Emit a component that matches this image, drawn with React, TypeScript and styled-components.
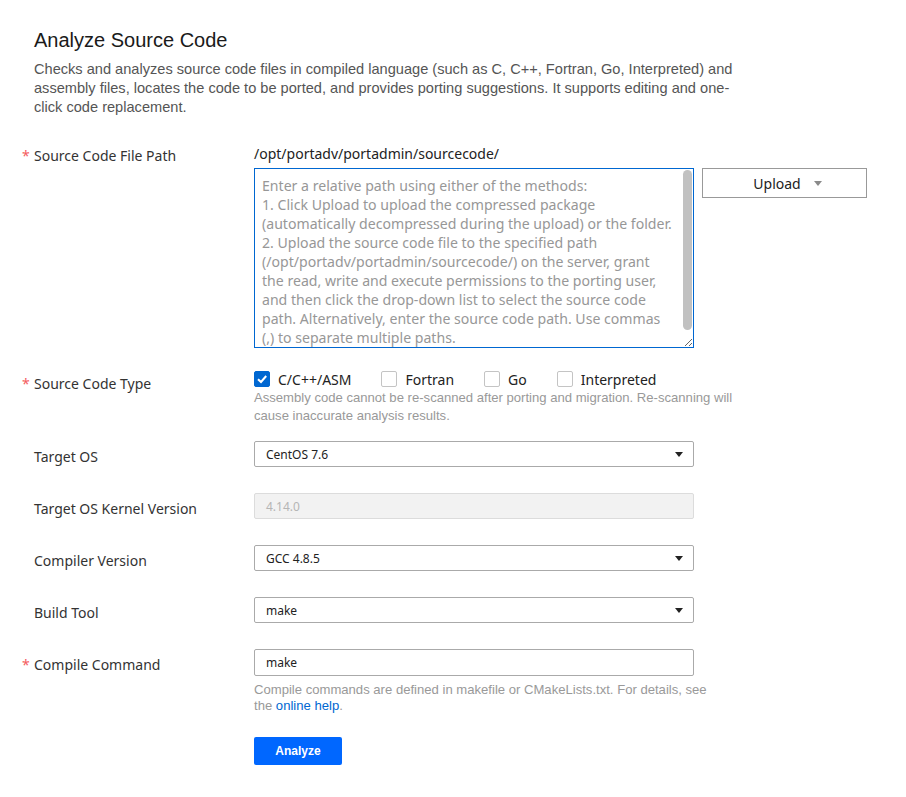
import * as React from "react";
import styled, { createGlobalStyle } from "styled-components";

const GlobalStyle = createGlobalStyle`
  html, body {
    margin: 0;
    padding: 0;
    background: #ffffff;
  }
  body {
    font-family: "Liberation Sans", Arial, sans-serif;
    color: #222;
  }
`;

const Page = styled.div`
  padding: 26px 34px 30px 34px;
  width: 906px;
  box-sizing: border-box;
`;

const Title = styled.h1`
  margin: 0 0 6px 0;
  font-size: 20px;
  line-height: 28px;
  font-weight: 400;
  color: #1a1a1a;
`;

const Description = styled.p`
  margin: 0 0 27px 0;
  max-width: 720px;
  font-size: 14.6px;
  line-height: 19px;
  color: #555;
`;

const Row = styled.div<{ gap: number }>`
  display: flex;
  align-items: flex-start;
  margin-bottom: ${p => p.gap}px;
`;

const Label = styled.div<{ offset: number }>`
  width: 220px;
  flex: 0 0 220px;
  padding-top: ${p => p.offset}px;
  font-family: "Noto Sans", "Open Sans", sans-serif;
  font-size: 14px;
  line-height: 20px;
  color: #333;
  box-sizing: border-box;
`;

const Star = styled.span<{ show: boolean }>`
  display: inline-block;
  width: 12px;
  margin-left: -12px;
  color: #f45c5e;
  visibility: ${p => (p.show ? "visible" : "hidden")};
`;

const Field = styled.div`
  display: flex;
  flex-direction: column;
`;

const PathText = styled.div`
  font-family: "Noto Sans", "Open Sans", sans-serif;
  font-size: 14px;
  line-height: 20px;
  color: #222;
  margin-bottom: 4px;
`;

const PathRow = styled.div`
  display: flex;
  align-items: flex-start;
  gap: 8px;
`;

const AreaWrap = styled.div`
  position: relative;
  width: 440px;
  height: 180px;
`;

const TextArea = styled.textarea`
  display: block;
  width: 440px;
  height: 180px;
  box-sizing: border-box;
  margin: 0;
  padding: 7px 4px 4px 7px;
  border: 1px solid #0067d1;
  border-radius: 0;
  outline: none;
  overflow: hidden;
  font-family: "Noto Sans", "Open Sans", sans-serif;
  font-size: 14.1px;
  line-height: 19px;
  color: #222;
  &::placeholder {
    color: #979797;
  }
`;

const ScrollThumb = styled.div`
  position: absolute;
  top: 2px;
  right: 2px;
  width: 9px;
  height: 160px;
  border-radius: 5px;
  background: #c1c1c1;
  pointer-events: none;
`;

const UploadButton = styled.button`
  width: 165px;
  height: 30px;
  display: flex;
  align-items: center;
  justify-content: center;
  gap: 13px;
  padding: 0 0 0 6px;
  background: #fff;
  border: 1px solid #999;
  border-radius: 0;
  font-family: "Noto Sans", "Open Sans", sans-serif;
  font-size: 14px;
  color: #222;
`;

const Caret = styled.span<{ tone: string; size: number }>`
  display: inline-block;
  width: 0;
  height: 0;
  border-left: ${p => p.size}px solid transparent;
  border-right: ${p => p.size}px solid transparent;
  border-top: ${p => p.size + 1}px solid ${p => p.tone};
`;

const CheckGroup = styled.div`
  display: flex;
  align-items: center;
  gap: 30px;
  height: 20px;
`;

const CheckItem = styled.label`
  display: flex;
  align-items: center;
  gap: 8px;
  font-family: "Noto Sans", "Open Sans", sans-serif;
  font-size: 14px;
  color: #222;
`;

const Box = styled.span<{ checked: boolean }>`
  width: 16px;
  height: 16px;
  box-sizing: border-box;
  border-radius: 2px;
  border: 1px solid ${p => (p.checked ? "#0067d1" : "#c4c4c4")};
  background: ${p => (p.checked ? "#0067d1" : "#fff")};
  display: flex;
  align-items: center;
  justify-content: center;
`;

const Hint = styled.div<{ lh: number; top: number; wrap: number }>`
  margin-top: ${p => p.top}px;
  max-width: ${p => p.wrap}px;
  font-family: "Liberation Sans", Arial, sans-serif;
  font-size: 13.1px;
  line-height: ${p => p.lh}px;
  color: #999;
`;

const Link = styled.a`
  color: #0067d1;
  text-decoration: none;
`;

const Select = styled.div<{ disabled?: boolean }>`
  width: 440px;
  height: 26px;
  box-sizing: border-box;
  display: flex;
  align-items: center;
  justify-content: space-between;
  padding: 0 10px 0 11px;
  border: 1px solid ${p => (p.disabled ? "#dcdcdc" : "#aaa")};
  border-radius: 2px;
  background: ${p => (p.disabled ? "#f2f2f2" : "#fff")};
  font-family: "Noto Sans", "Open Sans", sans-serif;
  font-size: 12px;
  color: ${p => (p.disabled ? "#b5b5b5" : "#222")};
`;

const TextInput = styled.div`
  width: 440px;
  height: 27px;
  box-sizing: border-box;
  display: flex;
  align-items: center;
  padding: 0 11px;
  border: 1px solid #aaa;
  border-radius: 2px;
  font-family: "Noto Sans", "Open Sans", sans-serif;
  font-size: 12px;
  color: #222;
`;

const PrimaryButton = styled.button`
  width: 88px;
  height: 28px;
  margin: 0;
  border: none;
  border-radius: 2px;
  background: #0067ff;
  color: #fff;
  font-family: "Liberation Sans", Arial, sans-serif;
  font-weight: 700;
  font-size: 12px;
`;

const placeholder = [
  "Enter a relative path using either of the methods:",
  "1. Click Upload to upload the compressed package",
  "(automatically decompressed during the upload) or the folder.",
  "2. Upload the source code file to the specified path",
  "(/opt/portadv/portadmin/sourcecode/) on the server, grant",
  "the read, write and execute permissions to the porting user,",
  "and then click the drop-down list to select the source code",
  "path. Alternatively, enter the source code path. Use commas",
  "(,) to separate multiple paths.",
].join("\n");

const types = [
  { name: "C/C++/ASM", checked: true },
  { name: "Fortran", checked: false },
  { name: "Go", checked: false },
  { name: "Interpreted", checked: false },
];

const Check = () => (
  <svg width="12" height="12" viewBox="0 0 12 12">
    <path d="M2 6.2 L5 9 L10.2 3" fill="none" stroke="#fff" strokeWidth="2" />
  </svg>
);

export default function App() {
  return (
    <>
      <GlobalStyle />
      <Page>
        <Title>Analyze Source Code</Title>
        <Description>
          Checks and analyzes source code files in compiled language (such as C, C++, Fortran, Go,
          Interpreted) and assembly files, locates the code to be ported, and provides porting
          suggestions. It supports editing and one-click code replacement.
        </Description>

        <Row gap={21}>
          <Label offset={2}>
            <Star show>*</Star>Source Code File Path
          </Label>
          <Field>
            <PathText>/opt/portadv/portadmin/sourcecode/</PathText>
            <PathRow>
              <AreaWrap>
                <TextArea placeholder={placeholder} />
                <ScrollThumb />
              </AreaWrap>
              <UploadButton>
                Upload
                <Caret tone="#8a8a8a" size={4} />
              </UploadButton>
            </PathRow>
          </Field>
        </Row>

        <Row gap={16}>
          <Label offset={5}>
            <Star show>*</Star>Source Code Type
          </Label>
          <Field>
            <CheckGroup>
              {types.map(t => (
                <CheckItem key={t.name}>
                  <Box checked={t.checked}>{t.checked && <Check />}</Box>
                  {t.name}
                </CheckItem>
              ))}
            </CheckGroup>
            <Hint lh={18} top={0} wrap={490}>
              Assembly code cannot be re-scanned after porting and migration. Re-scanning will cause
              inaccurate analysis results.
            </Hint>
          </Field>
        </Row>

        <Row gap={26}>
          <Label offset={6}>
            <Star show={false}>*</Star>Target OS
          </Label>
          <Select>
            CentOS 7.6
            <Caret tone="#222" size={4} />
          </Select>
        </Row>

        <Row gap={26}>
          <Label offset={6}>
            <Star show={false}>*</Star>Target OS Kernel Version
          </Label>
          <Select disabled>4.14.0</Select>
        </Row>

        <Row gap={26}>
          <Label offset={6}>
            <Star show={false}>*</Star>Compiler Version
          </Label>
          <Select>
            GCC 4.8.5
            <Caret tone="#222" size={4} />
          </Select>
        </Row>

        <Row gap={26}>
          <Label offset={6}>
            <Star show={false}>*</Star>Build Tool
          </Label>
          <Select>
            make
            <Caret tone="#222" size={4} />
          </Select>
        </Row>

        <Row gap={23}>
          <Label offset={6}>
            <Star show>*</Star>Compile Command
          </Label>
          <Field>
            <TextInput>make</TextInput>
            <Hint lh={16} top={6} wrap={470}>
              Compile commands are defined in makefile or CMakeLists.txt. For details, see the{" "}
              <Link href="#">online help</Link>.
            </Hint>
          </Field>
        </Row>

        <Row gap={0}>
          <Label offset={0} />
          <PrimaryButton>Analyze</PrimaryButton>
        </Row>
      </Page>
    </>
  );
}
